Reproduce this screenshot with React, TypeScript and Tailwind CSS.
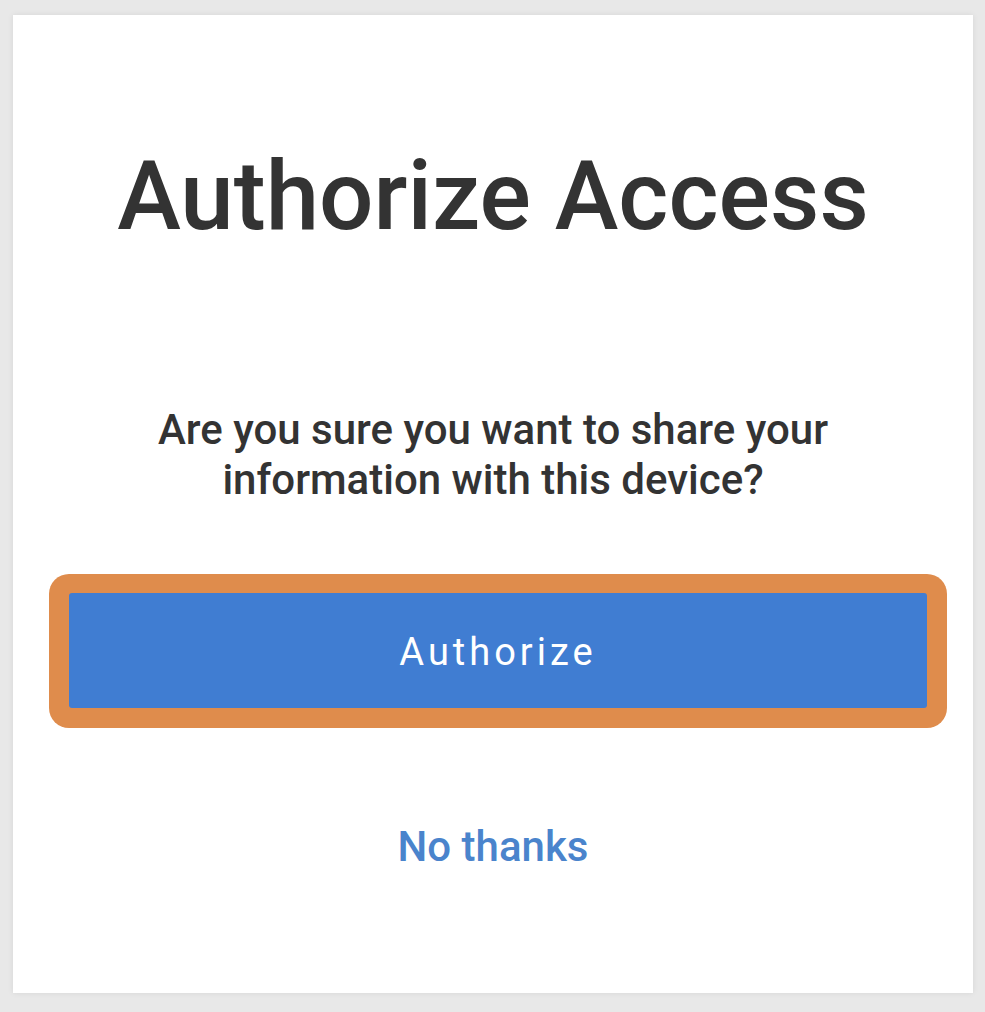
export default function App() {
  return (
    <div className="min-h-[1012px] w-full bg-[#e8e8e8] pt-[15px] pl-[13px]" style={{ fontFamily: 'Roboto, "Noto Sans", sans-serif' }}>
      <div className="w-[960px] h-[978px] bg-white shadow-[0_0_6px_rgba(0,0,0,0.08)] flex flex-col items-center pt-[133px]">
        <h1 className="text-[96px] leading-[96px] font-medium text-[#333333]">Authorize Access</h1>
        <p className="mt-[161px] text-[42px] leading-[50px] font-medium text-[#333333] text-center">
          Are you sure you want to share your
          <br />
          information with this device?
        </p>
        <div className="mt-[69px] ml-[10px] w-[898px] rounded-[20px] bg-[#df8c4c] p-[20px] pt-[19px]">
          <button className="w-full h-[115px] rounded-[3px] bg-[#407dd2] text-white text-[38px] font-normal tracking-[4px] flex items-center justify-center pt-[4px]">
            Authorize
          </button>
        </div>
        <button className="mt-[95px] text-[42px] leading-[48px] font-medium text-[#4a84cc]">No thanks</button>
      </div>
    </div>
  );
}
